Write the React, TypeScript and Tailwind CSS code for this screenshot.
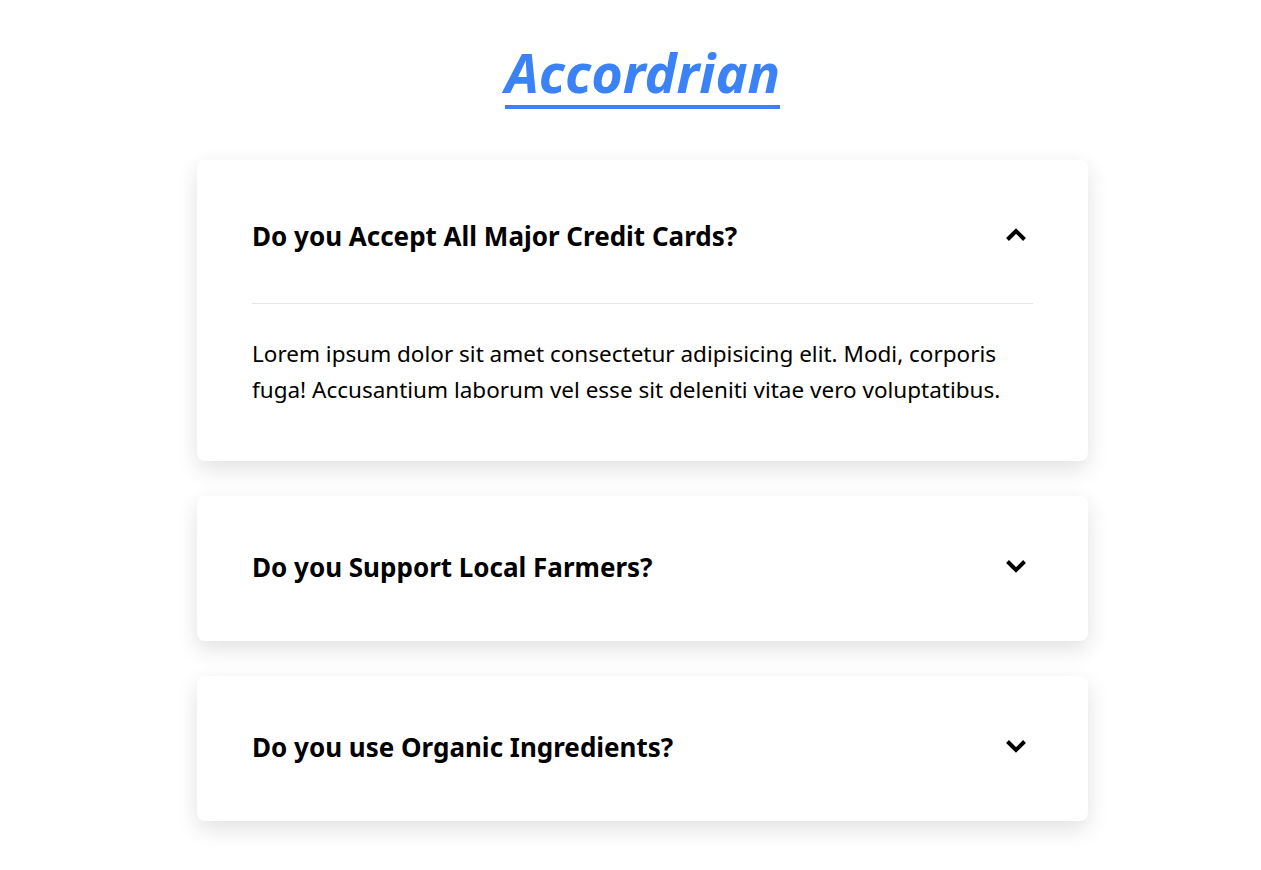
import React, { useState } from "react";

const items = [
  {
    q: "Do you Accept All Major Credit Cards?",
    a: "Lorem ipsum dolor sit amet consectetur adipisicing elit. Modi, corporis fuga! Accusantium laborum vel esse sit deleniti vitae vero voluptatibus.",
  },
  {
    q: "Do you Support Local Farmers?",
    a: "Lorem ipsum dolor sit amet consectetur adipisicing elit. Modi, corporis fuga! Accusantium laborum vel esse sit deleniti vitae vero voluptatibus.",
  },
  {
    q: "Do you use Organic Ingredients?",
    a: "Lorem ipsum dolor sit amet consectetur adipisicing elit. Modi, corporis fuga! Accusantium laborum vel esse sit deleniti vitae vero voluptatibus.",
  },
];

function Chevron({ up }: { up: boolean }) {
  return (
    <svg width="22" height="14" viewBox="0 0 22 14" fill="none">
      <polyline
        points={up ? "2.5,11.5 11,3 19.5,11.5" : "2.5,2.5 11,11 19.5,2.5"}
        stroke="#000"
        strokeWidth="4"
        strokeLinecap="butt"
        strokeLinejoin="miter"
      />
    </svg>
  );
}

export default function App() {
  const [open, setOpen] = useState<number | null>(0);
  return (
    <div
      className="min-h-[870px] bg-white pl-[24px] text-black"
      style={{ fontFamily: '"Noto Sans", "Open Sans", sans-serif' }}
    >
      <div className="mx-auto flex w-[891px] flex-col items-center pt-[35px]">
        <h1 className="text-[54px] font-bold italic leading-[74px] text-[#3b82f6] underline decoration-[4px] underline-offset-[12px]">
          Accordrian
        </h1>
        <div className="mt-[51px] flex w-full flex-col gap-[35px]">
          {items.map((it, i) => {
            const isOpen = open === i;
            return (
              <div
                key={i}
                className="rounded-[8px] bg-white px-[55px] shadow-[0_8px_22px_rgba(0,0,0,0.12)]"
              >
                <button
                  className={
                    isOpen
                      ? "flex h-[143px] w-full items-center justify-between pt-[9px] text-left"
                      : "flex h-[145px] w-full items-center justify-between pb-[4px] text-left"
                  }
                  onClick={() => setOpen(isOpen ? null : i)}
                >
                  <span className="text-[26px] font-bold leading-[34px]">{it.q}</span>
                  <span className="mr-[6px] mb-[2px] flex">
                    <Chevron up={isOpen} />
                  </span>
                </button>
                {isOpen && (
                  <div className="border-t border-[#e5e5e5] pb-[53px] pt-[32px]">
                    <p className="text-[22.5px] leading-[36px]">{it.a}</p>
                  </div>
                )}
              </div>
            );
          })}
        </div>
      </div>
    </div>
  );
}
